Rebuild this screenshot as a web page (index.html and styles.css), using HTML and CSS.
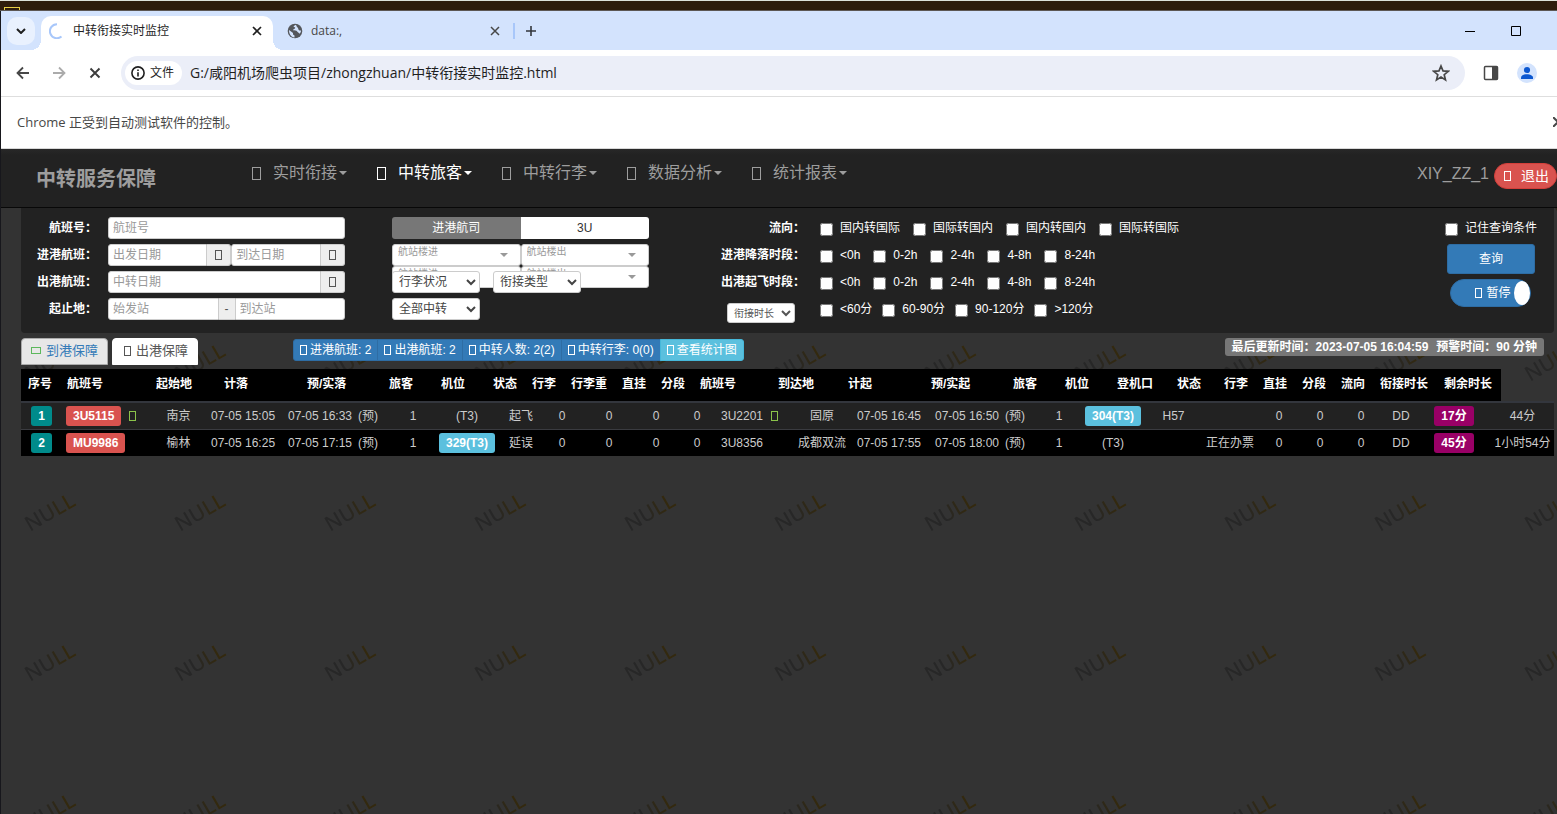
FILE: index.html
```html
<!DOCTYPE html>
<html lang="zh-CN">
<head>
<meta charset="utf-8">
<title>中转衔接实时监控</title>
<link rel="stylesheet" href="styles.css">
</head>
<body>
<div class="desktop-strip"><span class="desktop-mark"></span></div>
<div class="window">
  <header class="tab-strip">
    <button class="tab-search" aria-label="搜索标签页"><svg width="10" height="6" viewBox="0 0 10 6"><path d="M1 1l4 4 4-4" fill="none" stroke="#1f1f1f" stroke-width="2"/></svg></button>
    <div class="tab tab-current">
      <svg width="14" height="16" viewBox="0 0 14 16"><path d="M8 1.2A7 7 0 1 0 12.500 13.500" fill="none" stroke="#a8c7fa" stroke-width="2"/></svg>
      <span class="tab-title">中转衔接实时监控</span>
      <button class="plain" aria-label="关闭标签页"><svg width="10" height="10" viewBox="0 0 10 10"><path d="M1 1l8 8M9 1l-8 8" stroke="#1f1f1f" stroke-width="1.700"/></svg></button>
    </div>
    <div class="tab tab-other">
      <svg width="16" height="16" viewBox="0 0 16 16"><circle cx="8" cy="8" r="7.300" fill="#54575c"/><path d="M2 7l4 3v1.500l1.500 1v2C4 14 2 11 2 7zM9 1.800c-1.500.5-2.500 1.200-2.300 2.200.8.4 1.500 0 1.500 1S6 6 6 7.300c1.500.2 3.500-.2 4.200 1.200.4.800 1.600.8 2.300 2.300 1-1 1.500-2 1.500-3.300-1.200.2-2.500-.1-2.600-1.300C11.200 4.500 9.500 4 9 1.800z" fill="#d3e3fd"/></svg>
      <span class="tab-title">data:,</span>
      <button class="plain" aria-label="关闭标签页"><svg width="10" height="10" viewBox="0 0 10 10"><path d="M1 1l8 8M9 1l-8 8" stroke="#474747" stroke-width="1.500"/></svg></button>
    </div>
    <span class="tab-divider"></span>
    <button class="plain new-tab" aria-label="新标签页"><svg width="12" height="12" viewBox="0 0 12 12"><path d="M6 1v10M1 6h10" stroke="#33363b" stroke-width="1.600"/></svg></button>
    <div class="window-controls">
      <button class="plain" aria-label="最小化"><svg width="12" height="12" viewBox="0 0 12 12"><path d="M1 6.500h10" stroke="#000"/></svg></button>
      <button class="plain" aria-label="最大化"><svg width="12" height="12" viewBox="0 0 12 12"><path d="M1.500 1.500h9v9h-9z" fill="none" stroke="#000"/></svg></button>
    </div>
  </header>
  <div class="toolbar">
    <button class="plain" aria-label="后退"><svg width="14" height="14" viewBox="0 0 14 14"><path d="M13 7H2M7 1.500L1.500 7 7 12.500" fill="none" stroke="#474747" stroke-width="1.800"/></svg></button>
    <button class="plain" aria-label="前进"><svg width="14" height="14" viewBox="0 0 14 14"><path d="M1 7h11M7 1.500L12.500 7 7 12.500" fill="none" stroke="#ababab" stroke-width="1.800"/></svg></button>
    <button class="plain" aria-label="停止"><svg width="14" height="14" viewBox="0 0 14 14"><path d="M2.500 2.500l9 9M11.500 2.500l-9 9" stroke="#3c3c3c" stroke-width="1.900"/></svg></button>
    <div class="omnibox">
      <button class="site-chip"><svg width="14" height="14" viewBox="0 0 14 14"><circle cx="7" cy="7" r="6.100" fill="none" stroke="#1f1f1f" stroke-width="1.600"/><path d="M7 6.200v4.200M7 3.500v1.600" stroke="#1f1f1f" stroke-width="1.600"/></svg>文件</button>
      <input class="url" aria-label="地址" value="G:/咸阳机场爬虫项目/zhongzhuan/中转衔接实时监控.html">
      <button class="plain" aria-label="收藏"><svg width="18" height="18" viewBox="0 0 18 18"><path d="M9 2l2 4.900 5.200.4-4 3.400 1.300 5.200L9 13.100l-4.500 2.800 1.300-5.200-4-3.400L7 6.900z" fill="none" stroke="#474747" stroke-width="1.700"/></svg></button>
    </div>
    <div class="toolbar-end">
      <button class="plain" aria-label="侧边栏"><svg width="16" height="16" viewBox="0 0 16 16"><rect x="1.500" y="1.500" width="13" height="13" rx="1" fill="none" stroke="#474747" stroke-width="1.500"/><path d="M9 1.500h5.500v13H9z" fill="#474747"/></svg></button>
      <button class="plain" aria-label="个人资料"><svg width="20" height="20" viewBox="0 0 20 20"><circle cx="10" cy="10" r="10" fill="#d3e3fd"/><circle cx="10" cy="7" r="3.100" fill="#0b57d0"/><path d="M4 16v-1.500c0-2 3-3.300 6-3.300s6 1.300 6 3.300V16z" fill="#0b57d0"/></svg></button>
    </div>
  </div>
  <div class="infobar">
    <span>Chrome 正受到自动测试软件的控制。</span>
    <button class="plain" aria-label="关闭提示"><svg width="4" height="10" viewBox="0 0 4 10"><path d="M0 0l5 5-5 5" fill="none" stroke="#474747" stroke-width="2"/></svg></button>
  </div>

  <div class="page">
    <svg class="watermark" aria-hidden="true">
      <defs>
        <linearGradient id="fade"><stop offset="0.400" stop-color="#272727"/><stop offset="0.800" stop-color="#33290f"/></linearGradient>
        <pattern id="tile" width="150" height="150" patternUnits="userSpaceOnUse" x="0" y="120">
          <text class="watermark-text" transform="translate(29 113) rotate(-30)" fill="url(#fade)">NULL</text>
        </pattern>
      </defs>
      <rect width="100%" height="100%" fill="url(#tile)"/>
    </svg>
    <nav class="navbar">
      <a class="brand" href="#">中转服务保障</a>
      <div class="menu">
        <a href="#"><i class="box box-lg"></i>实时衔接<i class="caret"></i></a>
        <a class="on" href="#"><i class="box box-lg"></i>中转旅客<i class="caret"></i></a>
        <a href="#"><i class="box box-lg"></i>中转行李<i class="caret"></i></a>
        <a href="#"><i class="box box-lg"></i>数据分析<i class="caret"></i></a>
        <a href="#"><i class="box box-lg"></i>统计报表<i class="caret"></i></a>
      </div>
      <span class="user">XIY_ZZ_1</span>
      <button class="logout"><i class="box"></i>退出</button>
    </nav>

    <form class="panel">
      <div class="stack labels">
        <label class="row" for="flight">航班号：</label>
        <label class="row" for="arr-from">进港航班：</label>
        <label class="row" for="dep-date">出港航班：</label>
        <label class="row" for="origin">起止地：</label>
      </div>
      <div class="stack fields">
        <div class="row"><input class="text solo" id="flight" placeholder="航班号"></div>
        <div class="row">
          <div class="group group-wide"><input class="text" id="arr-from" placeholder="出发日期"><span class="addon"><i class="box"></i></span></div>
          <div class="group"><input class="text" aria-label="到达日期" placeholder="到达日期"><span class="addon"><i class="box"></i></span></div>
        </div>
        <div class="row"><div class="group"><input class="text" id="dep-date" placeholder="中转日期"><span class="addon"><i class="box"></i></span></div></div>
        <div class="row"><div class="group"><input class="text" id="origin" placeholder="始发站"><span class="addon dash">-</span><input class="text last" aria-label="到达站" placeholder="到达站"></div></div>
      </div>
      <div class="stack filters">
        <div class="row airline"><button type="button">进港航司</button><button type="button" class="code">3U</button></div>
        <div class="row">
          <div class="terminals">
            <div class="terminal"><select aria-label="航站楼进"><option>航站楼进</option></select></div>
            <div class="terminal"><select aria-label="航站楼出"><option>航站楼出</option></select></div>
            <div class="terminal"><select aria-label="第二航站楼进"><option>航站楼进</option></select></div>
            <div class="terminal"><select aria-label="第二航站楼出"><option>航站楼出</option></select></div>
          </div>
        </div>
        <div class="row raised">
          <select class="pick" aria-label="行李状况"><option>行李状况</option></select>
          <select class="pick" aria-label="衔接类型"><option>衔接类型</option></select>
        </div>
        <div class="row"><select class="pick" aria-label="中转范围"><option>全部中转</option></select></div>
      </div>
      <div class="stack labels">
        <span class="row">流向：</span>
        <span class="row">进港降落时段：</span>
        <span class="row">出港起飞时段：</span>
        <span class="row duration"><select class="pick-small" aria-label="衔接时长"><option>衔接时长</option></select></span>
      </div>
      <div class="stack checks">
        <div class="row"><label><input type="checkbox">国内转国际</label><label><input type="checkbox">国际转国内</label><label><input type="checkbox">国内转国内</label><label><input type="checkbox">国际转国际</label></div>
        <div class="row"><label><input type="checkbox">&lt;0h</label><label><input type="checkbox">0-2h</label><label><input type="checkbox">2-4h</label><label><input type="checkbox">4-8h</label><label><input type="checkbox">8-24h</label></div>
        <div class="row"><label><input type="checkbox">&lt;0h</label><label><input type="checkbox">0-2h</label><label><input type="checkbox">2-4h</label><label><input type="checkbox">4-8h</label><label><input type="checkbox">8-24h</label></div>
        <div class="row tight"><label><input type="checkbox">&lt;60分</label><label><input type="checkbox">60-90分</label><label><input type="checkbox">90-120分</label><label><input type="checkbox">&gt;120分</label></div>
      </div>
      <div class="stack actions">
        <div class="row checks"><label><input type="checkbox">记住查询条件</label></div>
        <button type="button" class="query">查询</button>
        <button type="button" class="toggle" aria-pressed="true"><i class="box"></i>暂停<i class="knob"></i></button>
      </div>
    </form>

    <div class="bar">
      <div class="views">
        <a class="view" href="#"><i class="box box-flat"></i>到港保障</a>
        <a class="view view-on" href="#"><i class="box"></i>出港保障</a>
      </div>
      <div class="stats">
        <button><i class="box"></i>进港航班: 2</button><button><i class="box"></i>出港航班: 2</button><button><i class="box"></i>中转人数: 2(2)</button><button><i class="box"></i>中转行李: 0(0)</button><button class="chart"><i class="box"></i>查看统计图</button>
      </div>
      <div class="updated"><span>最后更新时间：2023-07-05 16:04:59</span><span>预警时间：90 分钟</span></div>
    </div>

    <table class="head">
      <thead><tr><th>序号</th><th>航班号</th><th>起始地</th><th>计落</th><th>预/实落</th><th>旅客</th><th>机位</th><th>状态</th><th>行李</th><th>行李重</th><th>直挂</th><th>分段</th><th>航班号</th><th>到达地</th><th>计起</th><th>预/实起</th><th>旅客</th><th>机位</th><th>登机口</th><th>状态</th><th>行李</th><th>直挂</th><th>分段</th><th>流向</th><th>衔接时长</th><th>剩余时长</th></tr></thead>
    </table>
    <table class="flights">
      <tbody>
        <tr><td><b class="tag teal">1</b></td><td><b class="tag red">3U5115</b><i class="box green"></i></td><td>南京</td><td>07-05 15:05</td><td>07-05 16:33&ensp;(预)</td><td>1</td><td>(T3)</td><td>起飞</td><td>0</td><td>0</td><td>0</td><td>0</td><td>3U2201<i class="box green"></i></td><td>固原</td><td>07-05 16:45</td><td>07-05 16:50&ensp;(预)</td><td>1</td><td><b class="tag sky">304(T3)</b></td><td>H57</td><td></td><td>0</td><td>0</td><td>0</td><td>DD</td><td><b class="tag plum">17分</b></td><td>44分</td></tr>
        <tr><td><b class="tag teal">2</b></td><td><b class="tag red">MU9986</b></td><td>榆林</td><td>07-05 16:25</td><td>07-05 17:15&ensp;(预)</td><td>1</td><td><b class="tag sky">329(T3)</b></td><td>延误</td><td>0</td><td>0</td><td>0</td><td>0</td><td>3U8356</td><td>成都双流</td><td>07-05 17:55</td><td>07-05 18:00&ensp;(预)</td><td>1</td><td>(T3)</td><td></td><td>正在办票</td><td>0</td><td>0</td><td>0</td><td>DD</td><td><b class="tag plum">45分</b></td><td>1小时54分</td></tr>
      </tbody>
    </table>
  </div>
</div>
</body>
</html>
```

FILE: styles.css
```css
* { box-sizing: border-box; }

body {
  margin: 0;
  min-height: 100vh;
  display: flex;
  flex-direction: column;
  overflow: hidden;
  background: #2d1d0c;
  font: 12px/18px "Liberation Sans", "Noto Sans CJK SC", sans-serif;
}

button, input, select { font: inherit; margin: 0; }
button { cursor: pointer; }
a { text-decoration: none; }

.plain { display: flex; padding: 0; border: 0; background: none; }

/* browser frame */
.desktop-strip { height: 11px; padding: 6px 4px 0; border-top: 1px solid #dde3da; border-bottom: 1px solid #5c5754; }
.desktop-mark { display: block; width: 16px; height: 3px; border: 1px solid #e6cf45; border-bottom: 0; }

.window {
  flex: 1;
  display: flex;
  flex-direction: column;
  border-left: 1px solid #17171c;
  font-family: "Open Sans", "Noto Sans CJK SC", sans-serif;
}

.tab-strip { display: flex; align-items: center; height: 39px; padding-left: 6px; background: #d3e3fd; }
.tab-search {
  display: flex; align-items: center; justify-content: center;
  width: 28px; height: 28px; padding: 0; border: 0; border-radius: 10px; background: #e9f1fe;
}
.tab { display: flex; align-items: center; }
.tab-title { flex: 1; }
.tab-current {
  position: relative; align-self: flex-end;
  width: 232px; height: 34px; margin-left: 6px; padding: 0 11px 4px 8px; gap: 10px;
  border-radius: 10px 10px 0 0; background: #fff; color: #1f1f1f;
}
.tab-current::before, .tab-current::after {
  content: ""; position: absolute; bottom: 0; width: 10px; height: 10px;
}
.tab-current::before { right: 100%; background: radial-gradient(circle at 0 0, transparent 10px, #fff 10px); }
.tab-current::after { left: 100%; background: radial-gradient(circle at 100% 0, transparent 10px, #fff 10px); }
.tab-other { width: 240px; padding: 0 13px 0 14px; gap: 8px; color: #474747; }
.tab-divider { width: 2px; height: 16px; background: #a8c7fa; }
.new-tab { margin-left: 10px; }
.window-controls { display: flex; gap: 34px; margin-left: auto; padding-right: 35px; }

.toolbar {
  display: flex; align-items: center; gap: 22px;
  height: 47px; padding: 0 20px 0 15px; border-bottom: 1px solid #dedede; background: #fff;
}
.toolbar-end { display: flex; align-items: center; gap: 18px; margin-left: -4px; }
.omnibox {
  flex: 1; display: flex; align-items: center;
  height: 34px; margin-left: -3px; padding: 0 15px 0 4px;
  border-radius: 17px; background: #ebeef8;
}
.site-chip {
  display: flex; align-items: center; gap: 5px;
  height: 24px; padding: 0 8px 0 6px; border: 0; border-radius: 12px; background: #fff; color: #1f1f1f;
}
.url { flex: 1; min-width: 0; padding: 0 8px; border: 0; outline: 0; background: none; color: #1f1f1f; font-size: 14px; }

.infobar {
  display: flex; align-items: center; justify-content: space-between;
  height: 52px; padding: 0 0 2px 16px; border-bottom: 1px solid #d8d8d8; background: #fff; color: #474747; font-size: 13px;
}

/* application */
.page {
  position: relative; flex: 1; overflow: hidden; background: #333;
  font-family: "Liberation Sans", "Noto Sans CJK SC", sans-serif;
}
.page > * { position: relative; }
.page > .watermark { position: absolute; inset: 0; width: 100%; height: 100%; }
.watermark-text { font: 500 21px "Noto Sans", sans-serif; }

.box { display: inline-block; flex: none; width: 7px; height: 10px; border: 1px solid currentColor; }
.box-lg { width: 9px; height: 13px; }
.box-flat { width: 10px; height: 7px; color: #5cb85c; }
.caret { border: 4px solid transparent; border-top-color: currentColor; border-bottom: 0; }

.navbar {
  display: flex; align-items: center;
  height: 59px; padding-left: 35px; border-bottom: 1px solid #080808;
  background: linear-gradient(#282828, #222 6px); color: #9d9d9d;
}
.brand { padding-top: 2px; color: #9d9d9d; font-size: 20px; font-weight: 700; line-height: 28px; }
.menu { display: flex; gap: 30px; margin-left: 96px; padding-bottom: 10px; }
.menu a { display: flex; align-items: center; gap: 2px; color: #9d9d9d; font-size: 16px; line-height: 24px; }
.menu .box { margin-right: 10px; }
.menu .on { color: #fff; }
.user { margin-left: auto; padding-bottom: 8px; font-size: 16px; }
.logout {
  display: flex; align-items: center; gap: 10px;
  height: 26px; margin-left: 5px; margin-bottom: 5px; padding: 0 7px 0 9px;
  border: 1px solid #d43f3a; border-radius: 13px; background: #d9534f; color: #fff; font-size: 14px;
}

.panel {
  display: flex;
  margin: 0 3px 0 20px; padding: 9px 17px 13px 0;
  border-radius: 0 0 4px 4px; background: #222; color: #fff;
}
.stack { display: flex; flex-direction: column; gap: 5px; }
.row { display: flex; align-items: center; height: 22px; }
.labels { align-items: flex-end; width: 76px; font-weight: 700; white-space: nowrap; }
.fields { width: 237px; margin-left: 11px; }
.filters { width: 257px; margin-left: 47px; }
.filters + .labels { width: 156px; }

.text { flex: 1; width: 0; min-width: 0; height: 22px; padding: 0 4px; border: 1px solid #ccc; border-radius: 3px 0 0 3px; background: #fff; }
.text::placeholder { color: #999; opacity: 1; }
.solo { border-radius: 3px; }
.last { border-radius: 0 3px 3px 0; }
.group { flex: 12; display: flex; }
.group-wide { flex: 13; }
.addon {
  display: flex; align-items: center; justify-content: center;
  width: 24px; border: 1px solid #ccc; border-left: 0; border-radius: 0 3px 3px 0; background: #eee; color: #555;
}
.dash { width: 16px; border-right: 0; border-radius: 0; }

.airline button { flex: 1; height: 22px; border: 0; padding: 0; border-radius: 3px 0 0 3px; background: #777; color: #fff; }
.airline .code { border-radius: 0 3px 3px 0; background: #fff; color: #333; }
.filters .row:nth-child(2) { align-items: flex-start; }
.terminals { flex: 1; display: grid; grid-template-columns: 1fr 1fr; }
.terminal { position: relative; height: 22px; }
.terminal select {
  display: block; appearance: none; width: 100%; height: 22px; padding: 0 5px 6px;
  border: 1px solid #ccc; border-radius: 3px; background: #fff; color: #999; font-size: 10px; line-height: 14px;
}
.terminal::after {
  content: ""; position: absolute; top: 9px; right: 13px;
  border: 4px solid transparent; border-top-color: #999; border-bottom: 0;
}
.raised { position: relative; gap: 13px; }
.pick { width: 88px; height: 22px; padding: 0 2px; border: 1px solid #ccc; border-radius: 3px; background: #fff; color: #444; }
.pick-small { width: 68px; height: 20px; padding: 0 2px; border: 1px solid #ccc; border-radius: 3px; background: #fff; color: #555; font-size: 10px; font-weight: 400; }
.duration { align-items: flex-start; padding: 5px 10px 0 0; }

.checks { font-weight: 400; white-space: nowrap; }
.stack.checks { margin-left: 15px; }
.checks .row { gap: 13px; }
.checks .tight { gap: 10px; }
.checks label { display: flex; align-items: center; gap: 7px; }
.checks input { width: 13px; height: 13px; margin-top: 2px; }

.actions { align-items: center; margin-left: auto; }
.query { width: 88px; height: 30px; border: 1px solid #2e6da4; border-radius: 3px; background: #337ab7; color: #fff; }
.toggle {
  display: flex; align-items: center; justify-content: flex-end; gap: 4px;
  width: 81px; height: 28px; padding: 0; border: 1px solid #2e6da4; border-radius: 14px; background: #337ab7; color: #fff;
}
.knob { width: 16px; height: 24px; border-radius: 50%; background: #fff; }

.bar { display: flex; align-items: flex-start; margin: 5px 13px 4px 20px; }
.views { display: flex; gap: 4px; }
.view {
  display: flex; align-items: center; gap: 5px;
  height: 27px; padding: 0 9px 2px; border: 1px solid #aaa; border-radius: 4px 4px 0 0;
  background: #e7e7e7; color: #337ab7; font-size: 13px;
}
.view-on { padding: 0 9px 2px 11px; border-color: #fff; background: #fff; color: #555; }
.stats { display: flex; margin: 1px 0 0 95px; }
.stats button {
  display: flex; align-items: center; gap: 3px;
  height: 22px; margin-right: -1px; padding: 0 6px; border: 1px solid #2e6da4; background: #337ab7; color: #fff;
}
.stats button:first-child { border-radius: 3px 0 0 3px; }
.stats .chart { border-color: #46b8da; border-radius: 0 3px 3px 0; background: #5bc0de; }
.updated { display: flex; gap: 8px; margin-left: auto; padding: 0 7px; border-radius: 3px; background: #777; color: #fff; font-weight: 700; }

table { table-layout: fixed; border-collapse: collapse; white-space: nowrap; }
th, td { padding: 0; }
.head { width: 1480px; margin-left: 20px; background: #000; color: #fff; }
.head th { width: 39px; height: 32px; padding: 0 0 2px 7px; text-align: left; }
.head th:nth-child(2) { width: 89px; }
.head th:nth-child(3) { width: 68px; }
.head th:nth-child(4), .head th:nth-child(15) { width: 83px; }
.head th:nth-child(5), .head th:nth-child(16) { width: 82px; }
.head th:nth-child(6), .head th:nth-child(7), .head th:nth-child(17), .head th:nth-child(18) { width: 52px; }
.head th:nth-child(10) { width: 51px; }
.head th:nth-child(13) { width: 78px; }
.head th:nth-child(14) { width: 70px; }
.head th:nth-child(19) { width: 60px; }
.head th:nth-child(20) { width: 47px; }
.head th:nth-child(25), .head th:nth-child(26) { width: 64px; }

.flights { width: calc(100% - 23px); margin-left: 20px; border-top: 2px solid #33363d; color: #ccc; text-align: center; }
.flights tr { height: 27px; background: #222; }
.flights tr:nth-child(even) { border-top: 1px solid #3a3b40; background: #000; }
.flights td { height: 26px; vertical-align: middle; }
.flights td:nth-child(1) { width: 41px; }
.flights td:nth-child(2) { width: 84px; padding-left: 4px; text-align: left; }
.flights td:nth-child(3) { width: 65px; }
.flights td:nth-child(4), .flights td:nth-child(7) { width: 64px; }
.flights td:nth-child(5) { width: 116px; }
.flights td:nth-child(6), .flights td:nth-child(8), .flights td:nth-child(12) { width: 44px; }
.flights td:nth-child(9), .flights td:nth-child(11) { width: 38px; }
.flights td:nth-child(10) { width: 56px; }
.flights td:nth-child(13) { width: 73px; padding-left: 2px; text-align: left; }
.flights td:nth-child(14) { width: 60px; }
.flights td:nth-child(15), .flights td:nth-child(25) { width: 74px; }
.flights td:nth-child(16) { width: 108px; }
.flights td:nth-child(17), .flights td:nth-child(20) { width: 50px; }
.flights td:nth-child(18) { width: 58px; }
.flights td:nth-child(19), .flights td:nth-child(26) { width: 63px; }
.flights td:nth-child(21), .flights td:nth-child(23) { width: 48px; }
.flights td:nth-child(22) { width: 34px; }
.flights td:nth-child(24) { width: 32px; }

.tag { display: inline-block; padding: 0 7px; border-radius: 3px; color: #fff; line-height: 20px; }
.teal { background: #008b8b; }
.red { background: #d9534f; }
.sky { background: #5bc0de; }
.plum { background: #906; }
.green { margin-left: 8px; color: #8bc34a; vertical-align: -1px; }
```
